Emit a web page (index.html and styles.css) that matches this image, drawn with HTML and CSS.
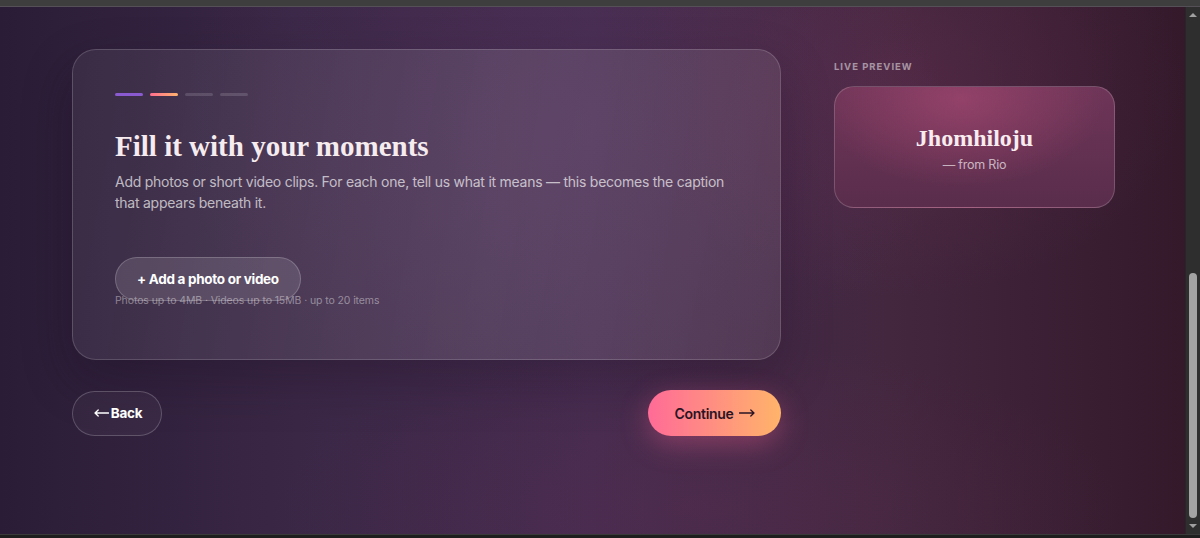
FILE: index.html
```html
<!DOCTYPE html>
<html lang="en">
<head>
<meta charset="utf-8">
<title>Create your story — Moments</title>
<link rel="stylesheet" href="styles.css">
</head>
<body>
<div class="window">
  <div class="topbar"></div>
  <div class="viewport">
    <main class="page">
      <div class="layout">
        <section class="builder">
          <div class="card">
            <div class="steps">
              <span class="step done"></span>
              <span class="step current"></span>
              <span class="step"></span>
              <span class="step"></span>
            </div>
            <h1 class="title">Fill it with your moments</h1>
            <p class="lead">Add photos or short video clips. For each one, tell us what it means — this becomes the caption that appears beneath it.</p>
            <button class="add-btn" type="button">+ Add a photo or video</button>
            <p class="hint">Photos up to 4MB · Videos up to 15MB · up to 20 items</p>
          </div>
          <div class="actions">
            <button class="btn-back" type="button">
              <svg class="arrow-icon" width="15" height="10" viewBox="0 0 15 10" aria-hidden="true"><path d="M14.5 5H1M4.2 2L1 5l3.2 3" fill="none" stroke="currentColor" stroke-width="1.3" stroke-linecap="round" stroke-linejoin="round"/></svg>
              <span>Back</span>
            </button>
            <button class="btn-continue" type="button">
              <span>Continue</span>
              <svg class="arrow-icon" width="16" height="10" viewBox="0 0 16 10" aria-hidden="true"><path d="M0.5 5H15M11.8 2L15 5l-3.2 3" fill="none" stroke="currentColor" stroke-width="1.3" stroke-linecap="round" stroke-linejoin="round"/></svg>
            </button>
          </div>
        </section>
        <aside class="preview">
          <div class="preview-label">LIVE PREVIEW</div>
          <div class="preview-card">
            <div class="preview-name">Jhomhiloju</div>
            <div class="preview-from">— from Rio</div>
          </div>
        </aside>
      </div>
    </main>
    <div class="scrollbar">
      <span class="arrow up"></span>
      <div class="track"><span class="thumb"></span></div>
      <span class="arrow down"></span>
    </div>
  </div>
  <div class="bottombar"></div>
</div>
</body>
</html>
```

FILE: styles.css
```css
* { box-sizing: border-box; }

html, body {
  margin: 0;
  height: 100%;
  overflow: hidden;
}

body {
  font-family: "Inter", "Noto Sans", sans-serif;
  color: #f4eaf0;
  background: #2a2a2a;
}

.window {
  display: flex;
  flex-direction: column;
  height: 538px;
}

.topbar {
  height: 7px;
  background: #3e3e3e;
  border-bottom: 1px solid #555058;
  flex: none;
}

.bottombar {
  height: 4px;
  background: #1e1e1e;
  border-top: 1px solid #3a3a3a;
  flex: none;
}

.viewport {
  flex: 1;
  display: flex;
  min-height: 0;
}

.page {
  flex: 1;
  background:
    radial-gradient(ellipse 520px 360px at 560px 120px, rgba(100, 60, 110, 0.25), transparent 75%),
    radial-gradient(ellipse 380px 280px at 900px 80px, rgba(120, 50, 90, 0.28), transparent 75%),
    radial-gradient(ellipse 560px 220px at 700px 500px, rgba(100, 45, 85, 0.25), transparent 75%),
    linear-gradient(90deg, #2a1c36 0%, #3a2746 25%, #452c4f 50%, #43273f 75%, #34192b 100%);
  padding: 42px 70px 0 72px;
}

.layout {
  display: flex;
  gap: 53px;
  align-items: flex-start;
}

.builder {
  width: 709px;
  flex: none;
}

.card {
  height: 311px;
  border-radius: 24px;
  border: 1px solid rgba(255, 255, 255, 0.16);
  background: linear-gradient(100deg, rgba(255, 255, 255, 0.06), rgba(255, 255, 255, 0.11) 60%, rgba(255, 255, 255, 0.08));
  padding: 43px 42px 0 42px;
  box-shadow: 0 20px 50px rgba(20, 8, 25, 0.25);
}

.steps {
  display: flex;
  gap: 7px;
}

.step {
  width: 28px;
  height: 3px;
  border-radius: 2px;
  background: rgba(255, 255, 255, 0.14);
}

.step.done { background: #8a5ad0; }
.step.current { background: linear-gradient(90deg, #ff6e8e, #ffb36e); }

.title {
  margin: 34px 0 0 0;
  font-family: "Liberation Serif", "DejaVu Serif", serif;
  font-weight: bold;
  font-size: 29px;
  line-height: 32px;
  color: #f6ecef;
}

.lead {
  margin: 9px 0 0 0;
  font-size: 14px;
  line-height: 21px;
  letter-spacing: -0.25px;
  color: rgba(255, 255, 255, 0.68);
  max-width: 640px;
}

.add-btn {
  margin-top: 44px;
  height: 44px;
  padding: 0 21px;
  border-radius: 22px;
  border: 1px solid rgba(255, 255, 255, 0.2);
  background: rgba(255, 255, 255, 0.12);
  color: #fff;
  font-family: inherit;
  font-weight: 700;
  font-size: 13.5px;
  letter-spacing: -0.3px;
}

.hint {
  margin: -7px 0 0 0;
  font-size: 10.5px;
  line-height: 14px;
  letter-spacing: -0.1px;
  color: rgba(255, 255, 255, 0.42);
}

.actions {
  display: flex;
  justify-content: space-between;
  align-items: center;
  margin-top: 30px;
}

.arrow-icon {
  display: block;
  flex: none;
}

.btn-back {
  height: 45px;
  width: 90px;
  border-radius: 23px;
  border: 1px solid rgba(255, 255, 255, 0.2);
  background: rgba(255, 255, 255, 0.04);
  color: #fff;
  font-family: inherit;
  font-weight: 700;
  font-size: 13.5px;
  letter-spacing: -0.3px;
  display: flex;
  align-items: center;
  justify-content: center;
  gap: 2px;
  padding: 0 0 0 2px;
}

.btn-continue {
  height: 46px;
  width: 133px;
  border-radius: 23px;
  border: none;
  background: linear-gradient(90deg, #ff6b97, #ffb46a);
  color: #2a1424;
  font-family: inherit;
  font-weight: 600;
  font-size: 14px;
  letter-spacing: -0.3px;
  display: flex;
  align-items: center;
  justify-content: center;
  gap: 5px;
  padding: 0;
  box-shadow: 0 8px 28px rgba(255, 100, 150, 0.35);
}

.preview {
  width: 281px;
  flex: none;
  padding-top: 12px;
}

.preview-label {
  font-size: 9.5px;
  font-weight: 700;
  letter-spacing: 1px;
  color: rgba(255, 255, 255, 0.5);
  line-height: 12px;
}

.preview-card {
  margin-top: 13px;
  height: 122px;
  border-radius: 20px;
  border: 1px solid rgba(255, 255, 255, 0.18);
  background:
    radial-gradient(ellipse 180px 110px at 45% 10%, rgba(160, 70, 110, 0.75), transparent 80%),
    linear-gradient(180deg, #6e3558, #5a2d4c);
  display: flex;
  flex-direction: column;
  align-items: center;
  justify-content: center;
}

.preview-name {
  font-family: "Liberation Serif", "DejaVu Serif", serif;
  font-weight: bold;
  font-size: 24px;
  line-height: 26px;
  color: #f8ecef;
  margin-top: 2px;
}

.preview-from {
  margin-top: 6px;
  font-size: 12.5px;
  letter-spacing: -0.2px;
  color: rgba(255, 255, 255, 0.65);
}

.scrollbar {
  width: 15px;
  flex: none;
  background: #2e2e2e;
  border-left: 1px solid #262626;
  display: flex;
  flex-direction: column;
  align-items: center;
}

.arrow {
  width: 0;
  height: 0;
  border-left: 4px solid transparent;
  border-right: 4px solid transparent;
  margin: 6px 0;
}

.arrow.up { border-bottom: 4px solid #a0a0a0; }
.arrow.down { border-top: 4px solid #a0a0a0; }

.track {
  flex: 1;
  width: 100%;
  display: flex;
  flex-direction: column;
  justify-content: flex-end;
  align-items: center;
}

.thumb {
  width: 8px;
  height: 245px;
  border-radius: 4px;
  background: #a3a3a3;
}
```
